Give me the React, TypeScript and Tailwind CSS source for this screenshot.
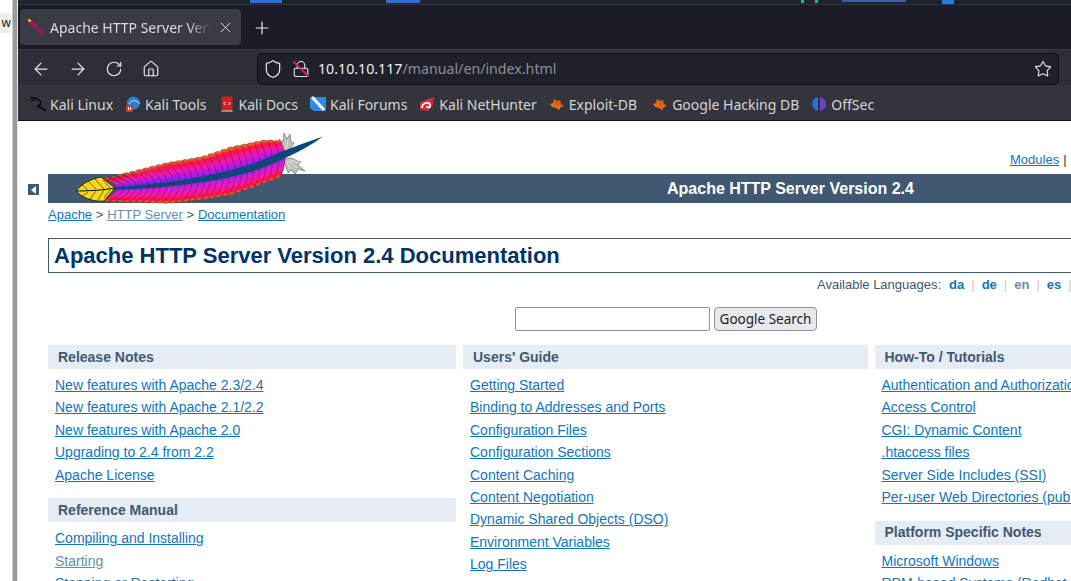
import type { ReactNode } from 'react';
import { ArrowLeft, ArrowRight, RotateCw, House, Shield, Lock, Star, X, Plus } from 'lucide-react';

const sans = { fontFamily: '"Liberation Sans", Arial, sans-serif' };

const spinePts: [number, number][] = [[39, 53], [119, 45], [161, 37], [202, 22], [210, 19]];
const upperPts: [number, number][] = [[20, 46], [27, 43], [51, 37], [87, 28], [122, 22], [152, 12], [186, 5], [201, 6], [204, 18]];
const lowerPts: [number, number][] = [[20, 64], [27, 66], [87, 68], [124, 64], [152, 59], [186, 47], [206, 39], [208, 30]];

function lerp(pts: [number, number][], x: number) {
  if (x <= pts[0][0]) return pts[0][1];
  for (let i = 1; i < pts.length; i++) {
    if (x <= pts[i][0]) {
      const [x0, y0] = pts[i - 1];
      const [x1, y1] = pts[i];
      return y0 + ((x - x0) / (x1 - x0)) * (y1 - y0);
    }
  }
  return pts[pts.length - 1][1];
}

function Feather() {
  const upper: string[] = [];
  const lower: string[] = [];
  for (let sx = 202; sx >= 36; sx -= 6.2) {
    const t = (sx - 38) / 166;
    const sy = lerp(spinePts, sx);
    const lean = 14 - t * 9;
    const ox = sx - lean;
    const uy = lerp(upperPts, ox);
    const ly = lerp(lowerPts, ox);
    upper.push(`M${sx} ${sy} Q${sx - 1} ${(sy + uy) / 2} ${ox} ${uy + 1} Q${ox + 4} ${uy - 2} ${ox + 8} ${uy + 1} Q${sx + 7} ${(sy + uy) / 2} ${sx + 7} ${sy} Z`);
    lower.push(`M${sx} ${sy} Q${sx - 1} ${(sy + ly) / 2} ${ox} ${ly - 1} Q${ox + 4} ${ly + 2} ${ox + 8} ${ly - 1} Q${sx + 7} ${(sy + ly) / 2} ${sx + 7} ${sy} Z`);
  }
  return (
    <svg viewBox="0 0 250 70" className="absolute left-[76px] top-[135px] w-[250px] h-[70px] overflow-visible">
      <defs>
        <linearGradient id="up" x1="0" y1="1" x2="0" y2="0">
          <stop offset="0" stopColor="#5a2cf0" />
          <stop offset="0.3" stopColor="#b01ee8" />
          <stop offset="0.55" stopColor="#f518b0" />
          <stop offset="0.82" stopColor="#fa1440" />
          <stop offset="1" stopColor="#f58a1a" />
        </linearGradient>
        <linearGradient id="low" x1="0" y1="0" x2="0" y2="1">
          <stop offset="0" stopColor="#7a24e8" />
          <stop offset="0.3" stopColor="#d01ed8" />
          <stop offset="0.6" stopColor="#fa18a0" />
          <stop offset="0.85" stopColor="#fa1440" />
          <stop offset="1" stopColor="#f58a1a" />
        </linearGradient>
      </defs>
      <g stroke="#6d726d" strokeWidth="0.7" fill="#bcc1bc">
        <path d="M204 21 L205 11 L203 4 L207 7 L208 -2 L211 4 L214 -1 L215 7 L218 8 L214 14 L209 21 Z" />
        <path d="M207 24 L216 23 L221 26 L225 27 L222 30 L229 36 L222 34 L219 39 L215 35 L212 38 L210 32 Z" />
      </g>
      <path d="M207 9 L208 19 M212 6 L209 19 M212 26 L221 33 M214 25 L224 28 M211 27 L214 34" stroke="#f2f2f2" strokeWidth="0.7" fill="none" />
      <g stroke="#5a0a24" strokeWidth="0.4">
        {upper.map((d) => <path key={d} d={d} fill="url(#up)" />)}
        {lower.map((d) => <path key={d} d={d} fill="url(#low)" />)}
      </g>
      <path d="M0.5 56 C4 50 14 44 25 42 L39 53 L28 66 C16 67 5 62 0.5 56 Z" fill="#f8d81c" stroke="#141408" strokeWidth="0.8" />
      <path d="M12 55 L6 50 M20 54 L12 46 M28 54 L19 44 M34 53 L27 45 M12 57 L7 61 M20 56 L14 64 M28 55 L22 65 M34 55 L28 63" stroke="#141408" strokeWidth="0.6" fill="none" />
      <path d="M0.5 56 C14 56 28 55 40 53" stroke="#141408" strokeWidth="1.2" fill="none" />
      <path d="M39 52.5 Q80 50 119 43 Q145 38 161 33.5 Q185 27 202 18 Q225 9 247 1.5 Q230 14 205 25 Q185 35 162 40 Q140 46 119 48 Q80 54 39 54.5 Z" fill="#0e4678" />
    </svg>
  );
}

function Bookmark({ icon, label, className = '' }: { icon: ReactNode; label: string; className?: string }) {
  return (
    <div className={`flex items-center gap-[4px] text-[14px] text-[#d5d5d8] whitespace-nowrap ${className}`}>
      <span className="w-4 h-4 flex items-center justify-center">{icon}</span>
      {label}
    </div>
  );
}

const bugIcon = (
  <svg viewBox="0 0 16 16" className="w-4 h-4">
    <path d="M1 8 L4 7 L5 3 L8 5 L11 4 L12 8 L15 10 L12 11 L10 14 L7 12 L3 11 Z" fill="#e8681c" />
    <path d="M6 6 L10 10 M9 5 L12 9" stroke="#b8450e" strokeWidth="0.8" />
  </svg>
);

function Toolbar() {
  return (
    <div className="bg-[#1b1c25] shrink-0">
      <div className="h-[5px] bg-[#1f2330] border-b border-[#33353d] flex items-start">
        <span className="ml-[250px] w-[32px] h-[3px] bg-[#2a6fd6]" />
        <span className="ml-[104px] w-[34px] h-[3px] bg-[#2a6fd6]" />
        <span className="ml-[381px] w-[3px] h-[3px] bg-[#1fb89a]" />
        <span className="ml-[11px] w-[3px] h-[3px] bg-[#1fb89a]" />
        <span className="ml-[24px] w-[64px] h-[2px] bg-[#3a5f9a]" />
        <span className="ml-[36px] w-[12px] h-[4px] bg-[#2a7ae0]" />
      </div>
      <div className="h-[44px] flex items-start pt-[4px]">
        <div className="w-[221px] h-[36px] ml-[20px] rounded-[4px] bg-[#3a3b44] flex items-center pl-[8px] pr-[7px] gap-[6px]">
          <svg viewBox="0 0 16 16" className="w-4 h-4 shrink-0">
            <path d="M1 1 L15 15" stroke="#c2125a" strokeWidth="3.4" />
            <path d="M3 3 L14.5 14.5" stroke="#2a1a7a" strokeWidth="0.9" />
            <path d="M0.5 0.5 L2.5 2.5" stroke="#f6d31e" strokeWidth="2.4" />
          </svg>
          <span className="flex-1 overflow-hidden whitespace-nowrap text-[14px] text-[#dcdce0] mask-r-from-85%">Apache HTTP Server Version 2.4</span>
          <X size={17} color="#e4e4e8" strokeWidth={1.3} />
        </div>
        <Plus size={20} color="#f0f0f3" strokeWidth={1.4} className="ml-[11px] mt-[9px]" />
      </div>
    </div>
  );
}

function NavBar() {
  return (
    <div className="h-[36px] bg-[#2d2e37] border-t border-[#3a3b44] flex items-center pt-[2px] ml-[18px] shrink-0">
      <div className="flex items-center pl-[5px] w-[239px]">
        <span className="w-[36.5px] flex justify-center"><ArrowLeft size={20} color="#e4e4e8" strokeWidth={1.5} /></span>
        <span className="w-[36.5px] flex justify-center"><ArrowRight size={20} color="#e4e4e8" strokeWidth={1.5} /></span>
        <span className="w-[36.5px] flex justify-center"><RotateCw size={18} color="#e4e4e8" strokeWidth={1.6} /></span>
        <span className="w-[36.5px] flex justify-center"><House size={18} color="#e4e4e8" strokeWidth={1.6} /></span>
      </div>
      <div className="w-[802px] h-[32px] rounded-[5px] bg-[#1f2029] border border-[#0e0e12] flex items-center pl-[5px] pr-[6px] text-[14.2px]">
        <Shield size={20} color="#e4e4e8" strokeWidth={1.5} />
        <span className="relative ml-[9px] mr-[8px] w-[18px] h-[18px]">
          <Lock size={18} color="#e4e4e8" strokeWidth={1.5} />
          <span className="absolute left-[8px] top-[-2px] w-[2px] h-[22px] bg-[#d0245e] -rotate-45" />
        </span>
        <span className="text-[#f0f0f3]">10.10.10.117</span>
        <span className="text-[#8f8f97]">/manual/en/index.html</span>
        <Star size={18} color="#e4e4e8" strokeWidth={1.5} className="ml-auto" />
      </div>
    </div>
  );
}

function Bookmarks() {
  return (
    <div className="h-[36px] bg-[#33343c] border-b border-[#0e0e12] ml-[18px] flex items-center pt-[3px] pl-[12px] gap-[12px] shrink-0">
      <Bookmark label="Kali Linux" icon={
        <svg viewBox="0 0 16 16" className="w-4 h-4"><path d="M0 2 C5 1 8 3 10 5 C12 7 9 9 10 11 C11 13 14 12 15.5 15 M1 5 L5 4 M9 9 L7 12" stroke="#08080a" strokeWidth="1.4" fill="none" /></svg>
      } />
      <Bookmark label="Kali Tools" icon={
        <svg viewBox="0 0 16 16" className="w-4 h-4"><circle cx="8.5" cy="7" r="6.5" fill="#2c7fd6" /><path d="M4 8 C7 3 11 4 15 8" stroke="#cfe4fa" fill="none" /><rect x="1" y="9" width="7" height="7" rx="2" fill="#e0352e" /><path d="M3.5 11 V14 M5.5 11 V14" stroke="#fff" /></svg>
      } />
      <Bookmark label="Kali Docs" icon={
        <svg viewBox="0 0 16 16" className="w-4 h-4"><rect x="2.5" y="0.5" width="11" height="14" rx="1" fill="#c9231f" /><path d="M2.5 15 H13.5" stroke="#e4e4e8" /><path d="M6.5 6 L5 7.5 L6.5 9 M9.5 6 L11 7.5 L9.5 9" stroke="#fff" fill="none" /></svg>
      } />
      <Bookmark label="Kali Forums" icon={
        <svg viewBox="0 0 16 16" className="w-4 h-4"><path d="M0 1 H16 V15 H4 L0 12 Z" fill="#2e8be6" /><path d="M2 1 L14 14" stroke="#f4f4f4" strokeWidth="3" /></svg>
      } />
      <Bookmark label="Kali NetHunter" icon={
        <svg viewBox="0 0 16 16" className="w-4 h-4"><path d="M1 6 L15 1 L14 9 L9 15 L1 14 Z" fill="#d4273c" /><path d="M3 12 C3 6 12 5 11 10 C11 12 8 12 8 10" stroke="#f4f4f4" strokeWidth="2" fill="none" /></svg>
      } />
      <Bookmark label="Exploit-DB" icon={bugIcon} />
      <Bookmark label="Google Hacking DB" icon={bugIcon} className="ml-[3px]" />
      <Bookmark label="OffSec" icon={
        <svg viewBox="0 0 16 16" className="w-4 h-4"><path d="M7 1 C3 2 1 5 1 8 C1 11 3 14 7 15 Z" fill="#2c6fd6" /><path d="M9 1 C13 2 15 5 15 8 C15 11 13 14 9 15 Z" fill="#6a45c8" /></svg>
      } />
    </div>
  );
}

function Section({ title, links }: { title: string; links: [string, boolean?][] }) {
  return (
    <div className="mb-[12px]">
      <div className="h-[24px] bg-[#e5ecf3] pl-[10px] flex items-center text-[14px] font-bold text-[#405871]">{title}</div>
      <ul className="pt-[5.4px] pl-[7px]">
        {links.map(([label, visited]) => (
          <li key={label} className="h-[22.4px] flex items-center whitespace-nowrap text-[14px]">
            <a className={visited ? 'underline text-[#668caa]' : 'underline text-[#0f76bd]'}>{label}</a>
          </li>
        ))}
      </ul>
    </div>
  );
}

function Page() {
  return (
    <div className="relative flex-1 min-h-0 ml-[18px] bg-white overflow-hidden" style={sans}>
      <div className="w-[1400px] pl-[30px]">
        <div className="h-[53px] flex justify-start items-end pb-[5px] pl-[962px] text-[13px] text-[#333]">
          <a className="underline text-[#0f76bd]">Modules</a>
          <span className="ml-[4px]">|</span>
        </div>
        <div className="h-[29px] bg-[#405871] pl-[619px] flex items-center text-[16px] font-bold text-white">Apache HTTP Server Version 2.4</div>
        <div className="h-[23px] flex items-center text-[13px] text-[#405871]">
          <a className="underline text-[#0f76bd]">Apache</a>
          <span className="mx-[3.75px]">&gt;</span>
          <a className="underline text-[#668caa]">HTTP Server</a>
          <span className="mx-[3.75px]">&gt;</span>
          <a className="underline text-[#0f76bd]">Documentation</a>
        </div>
        <h1 className="mt-[12px] h-[35px] border border-[#405871] pl-[5px] flex items-center text-[22px] font-bold text-[#003366]">Apache HTTP Server Version 2.4 Documentation</h1>
        <div className="h-[24px] pl-[769px] flex items-center text-[13px] text-[#405871]">
          Available Languages:
          <span className="ml-[8px] font-bold text-[#0f76bd]">da</span>
          <span className="mx-[7px] text-[#c8ccd0]">|</span>
          <span className="font-bold text-[#0f76bd]">de</span>
          <span className="mx-[7px] text-[#c8ccd0]">|</span>
          <span className="font-bold text-[#668caa]">en</span>
          <span className="mx-[7px] text-[#c8ccd0]">|</span>
          <span className="font-bold text-[#0f76bd]">es</span>
          <span className="mx-[7px] text-[#c8ccd0]">|</span>
        </div>
        <div className="pt-[10px] pl-[467px] flex items-center gap-[4px]">
          <div className="w-[195px] h-[24px] border border-[#8f8f9d] rounded-[2px] bg-white" />
          <button className="w-[103px] h-[24px] border border-[#8f8f9d] rounded-[4px] bg-[#e9e9ed] text-[13.5px] text-[#222] whitespace-nowrap" style={{ fontFamily: '"Noto Sans", sans-serif' }}>Google Search</button>
        </div>
        <div className="mt-[14px] grid grid-cols-[408px_404.5px_405px] gap-x-[7px]">
          <div>
            <Section title="Release Notes" links={[['New features with Apache 2.3/2.4'], ['New features with Apache 2.1/2.2'], ['New features with Apache 2.0'], ['Upgrading to 2.4 from 2.2'], ['Apache License']]} />
            <Section title="Reference Manual" links={[['Compiling and Installing'], ['Starting', true], ['Stopping or Restarting']]} />
          </div>
          <div>
            <Section title="Users' Guide" links={[['Getting Started'], ['Binding to Addresses and Ports'], ['Configuration Files'], ['Configuration Sections'], ['Content Caching'], ['Content Negotiation'], ['Dynamic Shared Objects (DSO)'], ['Environment Variables'], ['Log Files']]} />
          </div>
          <div>
            <Section title="How-To / Tutorials" links={[['Authentication and Authorization'], ['Access Control'], ['CGI: Dynamic Content'], ['.htaccess files'], ['Server Side Includes (SSI)'], ['Per-user Web Directories (public_html)']]} />
            <Section title="Platform Specific Notes" links={[['Microsoft Windows'], ['RPM-based Systems (Redhat / CentOS / Fedora)']]} />
          </div>
        </div>
      </div>
      <div className="absolute left-[10px] top-[63px] w-[11px] h-[11px] bg-[#405871] flex items-center justify-center">
        <span className="w-0 h-0 border-y-[4px] border-y-transparent border-r-[5px] border-r-white" />
      </div>
    </div>
  );
}

export default function App() {
  return (
    <div className="relative w-[1071px] h-[581px] overflow-hidden bg-white flex flex-col" style={{ fontFamily: '"Noto Sans", sans-serif' }}>
      <Toolbar />
      <NavBar />
      <Bookmarks />
      <Page />
      <Feather />
      <div className="absolute left-0 top-0 bottom-0 w-[18px] flex">
        <div className="w-[12px] bg-white pt-[13px]">
          <div className="w-[11px] h-[20px] bg-[#eeeeee] text-[12px] leading-[20px] text-[#222] overflow-hidden text-right">w</div>
        </div>
        <div className="w-[1px] bg-[#c8c8c8]" />
        <div className="w-[4px] bg-[#9b9b9b]" />
        <div className="w-[1px] bg-[#e8e8e8]" />
      </div>
    </div>
  );
}
